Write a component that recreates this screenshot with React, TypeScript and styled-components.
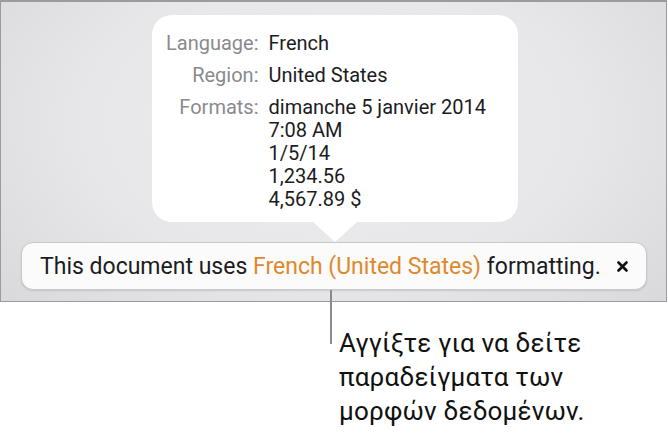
import React from 'react'
import styled, { createGlobalStyle } from 'styled-components'

const GlobalStyle = createGlobalStyle`
  html, body {
    margin: 0;
    padding: 0;
    background: #ffffff;
  }
  body {
    font-family: Roboto, "Liberation Sans", sans-serif;
    color: #1c1c1e;
    -webkit-font-smoothing: antialiased;
  }
`

const rows = [
  { label: 'Language:', values: ['French'] },
  { label: 'Region:', values: ['United States'] },
  {
    label: 'Formats:',
    values: ['dimanche 5 janvier 2014', '7:08 AM', '1/5/14', '1,234.56', '4,567.89 $'],
  },
]

const App = () => {
  return (
    <StyledPage>
      <GlobalStyle />
      <StyledScreen>
        <StyledPopover>
          {rows.map((row) => (
            <React.Fragment key={row.label}>
              <StyledLabel>{row.label}</StyledLabel>
              <StyledValue>
                {row.values.map((v) => (
                  <div key={v}>{v}</div>
                ))}
              </StyledValue>
            </React.Fragment>
          ))}
        </StyledPopover>
        <StyledBanner>
          <span>
            This document uses <StyledAccent>French (United States)</StyledAccent> formatting.
          </span>
          <StyledClose aria-label="Close">
            <svg width="11" height="11" viewBox="0 0 11 11">
              <path d="M1.5 1.5 L9.5 9.5 M9.5 1.5 L1.5 9.5" stroke="#111" strokeWidth="2.6" strokeLinecap="round" />
            </svg>
          </StyledClose>
        </StyledBanner>
      </StyledScreen>
      <StyledCallout>
        <StyledLeader />
        <p>
          Αγγίξτε για να δείτε
          <br />
          παραδείγματα των
          <br />
          μορφών δεδομένων.
        </p>
      </StyledCallout>
    </StyledPage>
  )
}

export default App

const StyledPage = styled.div`
  width: 668px;
  height: 436px;
  overflow: hidden;
`

const StyledScreen = styled.div`
  box-sizing: border-box;
  width: 667px;
  height: 302px;
  border: 1px solid #9b9b9d;
  border-top-width: 2px;
  background: radial-gradient(ellipse 68% 95% at 50% 40%, #ededef 0%, #e7e7e9 55%, #d8d8db 100%);
  display: flex;
  flex-direction: column;
  padding-top: 13px;
`

const StyledPopover = styled.div`
  position: relative;
  box-sizing: border-box;
  width: 366px;
  height: 207px;
  margin-left: 151px;
  padding: 17px 0 0 14px;
  background: #ffffff;
  border-radius: 20px;
  display: grid;
  grid-template-columns: auto 1fr;
  column-gap: 10px;
  row-gap: 9px;
  align-content: start;
  font-size: 20px;
  line-height: 23px;

  &::after {
    content: '';
    position: absolute;
    left: 161px;
    bottom: -20px;
    width: 0;
    height: 0;
    border-left: 22px solid transparent;
    border-right: 22px solid transparent;
    border-top: 20px solid #ffffff;
  }
`

const StyledLabel = styled.div`
  text-align: right;
  color: #8a8a8e;
`

const StyledValue = styled.div`
  color: #1c1c1e;
`

const StyledBanner = styled.div`
  box-sizing: border-box;
  width: 626px;
  height: 48px;
  margin: 20px 0 0 20px;
  padding: 0 18px 0 18px;
  display: flex;
  align-items: center;
  justify-content: space-between;
  background: #fbfbfb;
  border: 1px solid #c9c9cc;
  border-radius: 12px;
  box-shadow: 0 1px 2px rgba(0, 0, 0, 0.12);
  font-size: 23px;
  color: #1c1c1e;
  white-space: nowrap;
`

const StyledAccent = styled.span`
  color: #e0892c;
`

const StyledClose = styled.span`
  display: flex;
  align-items: center;
`

const StyledCallout = styled.div`
  position: relative;
  margin-left: 339px;
  padding-top: 24px;

  & p {
    margin: 0;
    font-size: 26px;
    line-height: 34px;
    color: #111111;
    white-space: nowrap;
    letter-spacing: 0.2px;
  }
`

const StyledLeader = styled.div`
  position: absolute;
  left: -9px;
  top: -12px;
  width: 2px;
  height: 54px;
  background: #8a8a8c;
`
